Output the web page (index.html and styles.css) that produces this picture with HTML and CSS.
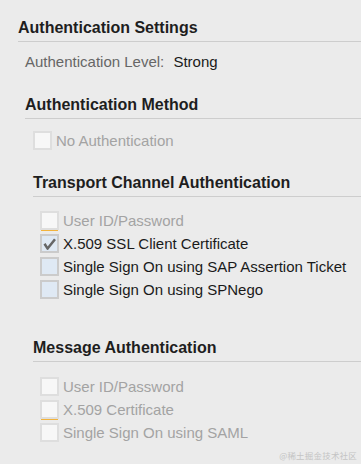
FILE: index.html
```html
<!DOCTYPE html>
<html lang="en">
<head>
  <meta charset="UTF-8">
  <meta name="viewport" content="width=device-width, initial-scale=1.0">
  <title>Authentication Settings</title>
  <link rel="stylesheet" href="styles.css">
</head>
<body>
  <main class="panel">
    <section class="group group-top">
      <h1 class="group-title">Authentication Settings</h1>
      <div class="group-body">
        <p class="level">
          <span class="level-label">Authentication Level:</span>
          <span class="level-value">Strong</span>
        </p>

        <section class="group group-method">
          <h2 class="group-title">Authentication Method</h2>
          <div class="group-body indent-8">
            <label class="check-row is-disabled">
              <span class="check"></span>
              <span class="check-text">No Authentication</span>
            </label>

            <section class="group group-transport">
              <h3 class="group-title">Transport Channel Authentication</h3>
              <div class="group-body list">
                <label class="check-row is-disabled">
                  <span class="check is-focused"></span>
                  <span class="check-text">User ID/Password</span>
                </label>
                <label class="check-row">
                  <span class="check">
                    <svg viewBox="0 0 19 19" width="19" height="19">
                      <path d="M4.5 9.8 L7.6 14.6 L15 5.2" fill="none" stroke="#666666" stroke-width="2.5" stroke-linejoin="round"/>
                    </svg>
                  </span>
                  <span class="check-text">X.509 SSL Client Certificate</span>
                </label>
                <label class="check-row">
                  <span class="check"></span>
                  <span class="check-text">Single Sign On using SAP Assertion Ticket</span>
                </label>
                <label class="check-row">
                  <span class="check"></span>
                  <span class="check-text">Single Sign On using SPNego</span>
                </label>
              </div>
            </section>

            <section class="group group-message">
              <h3 class="group-title">Message Authentication</h3>
              <div class="group-body list">
                <label class="check-row is-disabled">
                  <span class="check"></span>
                  <span class="check-text">User ID/Password</span>
                </label>
                <label class="check-row is-disabled">
                  <span class="check is-focused"></span>
                  <span class="check-text">X.509 Certificate</span>
                </label>
                <label class="check-row is-disabled">
                  <span class="check"></span>
                  <span class="check-text">Single Sign On using SAML</span>
                </label>
              </div>
            </section>
          </div>
        </section>
      </div>
    </section>
  </main>

  <div class="watermark">@稀土掘金技术社区</div>
</body>
</html>
```

FILE: styles.css
```css
:root {
  --bg: #ebebeb;
  --line: #cdcdcd;
  --title: #1e1e1e;
  --label: #666666;
  --text: #1a1a1a;
  --muted: #a3a3a3;
  --box-border: #cbcbcb;
  --box-fill: #dfe9f4;
  --box-off: #f7f7f7;
  --box-off-border: #dedede;
  --focus: #f2b33d;
}

* {
  box-sizing: border-box;
  margin: 0;
  padding: 0;
}

html, body {
  height: 100%;
}

body {
  background: var(--bg);
  font-family: 'Liberation Sans', Arial, sans-serif;
  font-size: 15px;
  color: var(--text);
  position: relative;
  overflow: hidden;
}

.panel {
  padding: 18px 0 0 18px;
}

.group-title {
  font-size: 16px;
  font-weight: bold;
  line-height: 20px;
  color: var(--title);
  padding-bottom: 3px;
  border-bottom: 1px solid var(--line);
}

.group-body {
  padding-left: 7px;
}

.indent-8 {
  padding-left: 8px;
}

.level {
  margin-top: 10px;
  line-height: 20px;
}

.level-label {
  color: var(--label);
}

.level-value {
  color: var(--text);
  margin-left: 5px;
}

.group-method {
  margin-top: 23px;
}

.group-method > .group-body > .check-row {
  margin-top: 10px;
}

.group-transport {
  margin-top: 21px;
}

.group-transport .list {
  margin-top: 12px;
}

.group-message {
  margin-top: 37px;
}

.group-message .list {
  margin-top: 13px;
}

.check-row {
  display: flex;
  align-items: center;
  gap: 4px;
  height: 23px;
  color: var(--text);
}

.check {
  width: 19px;
  height: 19px;
  flex: none;
  border: 2px solid var(--box-border);
  background: var(--box-fill);
  display: flex;
  align-items: center;
  justify-content: center;
}

.check svg {
  display: block;
  margin: -2px;
}

.is-disabled {
  color: var(--muted);
}

.is-disabled .check {
  background: var(--box-off);
  border-color: var(--box-off-border);
}

.check.is-focused {
  box-shadow: 0 2px 0 -1px var(--focus);
}

.watermark {
  position: absolute;
  right: 4px;
  bottom: 3px;
  font-family: 'Noto Sans CJK SC', sans-serif;
  font-size: 8.5px;
  color: #c4c4c4;
  letter-spacing: 0.2px;
}
```
